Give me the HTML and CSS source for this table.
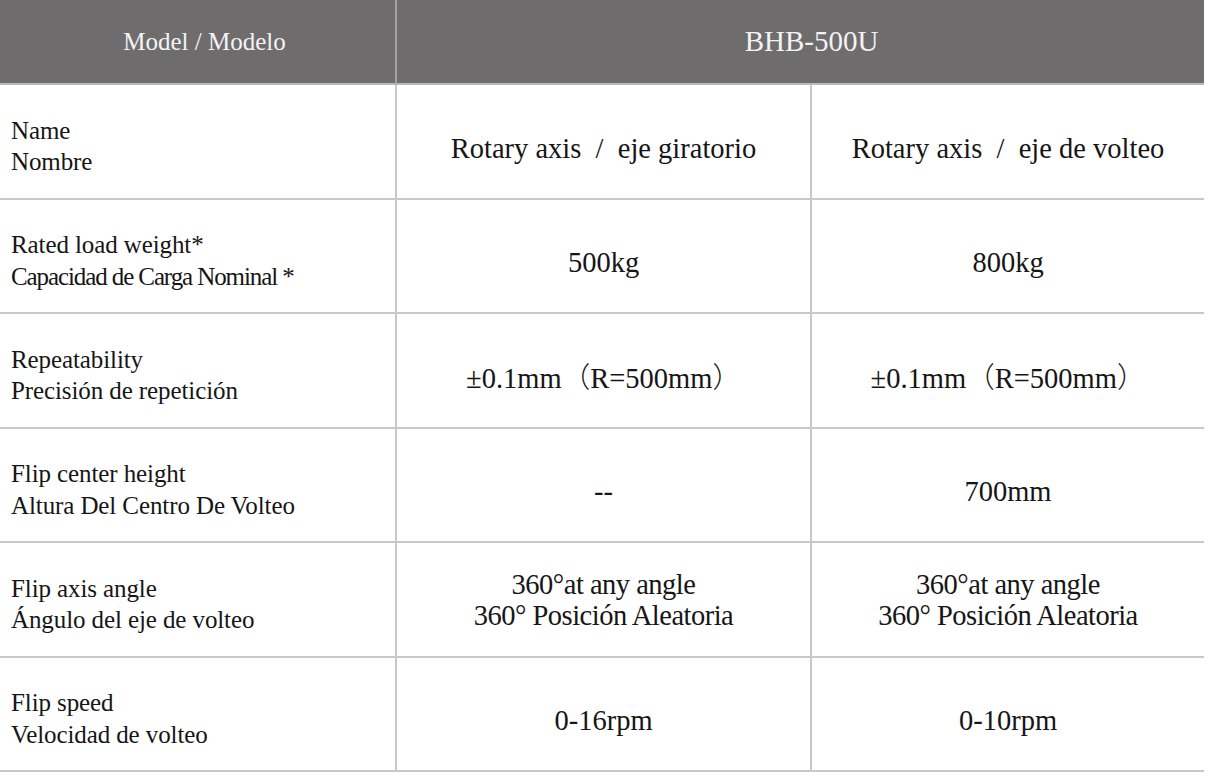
FILE: index.html
```html
<!DOCTYPE html>
<html lang="en">
<head>
<meta charset="utf-8">
<title>BHB-500U</title>
<link rel="stylesheet" href="styles.css">
</head>
<body>
<div class="spec">
  <div class="hcell hlabel">Model / Modelo</div>
  <div class="hcell hmodel">BHB-500U</div>

  <div class="label"><div>Name<br>Nombre</div></div>
  <div class="val one"><div>Rotary axis&nbsp; /&nbsp;&nbsp;eje giratorio</div></div>
  <div class="val one"><div>Rotary axis&nbsp; /&nbsp;&nbsp;eje de volteo</div></div>

  <div class="label"><div>Rated load weight*<br><span class="sm">Capacidad de Carga Nominal *</span></div></div>
  <div class="val one"><div>500kg</div></div>
  <div class="val one"><div>800kg</div></div>

  <div class="label"><div>Repeatability<br>Precisión de repetición</div></div>
  <div class="val one"><div>±0.1mm<span class="cjk">（</span>R=500mm<span class="cjk">）</span></div></div>
  <div class="val one"><div>±0.1mm<span class="cjk">（</span>R=500mm<span class="cjk">）</span></div></div>

  <div class="label"><div>Flip center height<br>Altura Del Centro De Volteo</div></div>
  <div class="val one"><div>--</div></div>
  <div class="val one"><div>700mm</div></div>

  <div class="label"><div>Flip axis angle<br>Ángulo del eje de volteo</div></div>
  <div class="val two"><div>360°at any angle<br>360° Posición Aleatoria</div></div>
  <div class="val two"><div>360°at any angle<br>360° Posición Aleatoria</div></div>

  <div class="label"><div>Flip speed<br>Velocidad de volteo</div></div>
  <div class="val one"><div>0-16rpm</div></div>
  <div class="val one"><div>0-10rpm</div></div>
</div>
</body>
</html>
```
FILE: styles.css
```css
html, body {
  margin: 0;
  padding: 0;
  background: #ffffff;
}

.spec {
  display: grid;
  grid-template-columns: 395px 415px 394px;
  grid-template-rows: 85px repeat(6, 114.5px);
  width: 1204px;
  font-family: "Liberation Serif", "Times New Roman", "DejaVu Serif", serif;
  color: #161616;
}

.cjk {
  font-family: "Noto Sans CJK SC", sans-serif;
  font-weight: 300;
}

.hcell {
  background: #6e6c6d;
  color: #f3f3f3;
  display: flex;
  align-items: center;
  justify-content: center;
  border-bottom: 2px solid #b9b9b9;
  box-sizing: border-box;
}

.hlabel {
  font-size: 25px;
  padding-left: 14px;
}

.hmodel {
  grid-column: 2 / 4;
  font-size: 29px;
  border-left: 2px solid #a3a1a2;
  padding-left: 22px;
}

.label,
.val {
  box-sizing: border-box;
  border-bottom: 2px solid #c8c8c8;
  display: flex;
  align-items: center;
}

.label {
  font-size: 25px;
  line-height: 31.5px;
  padding-left: 11px;
  padding-top: 10px;
  letter-spacing: -0.1px;
}

.label .sm {
  letter-spacing: -1.1px;
}

.val {
  font-size: 28.5px;
  line-height: 31px;
  justify-content: center;
  text-align: center;
  border-left: 2px solid #c8c8c8;
}

.val.one {
  padding-top: 14px;
}

.val.two {
  padding-top: 2px;
  letter-spacing: -0.5px;
}
```
